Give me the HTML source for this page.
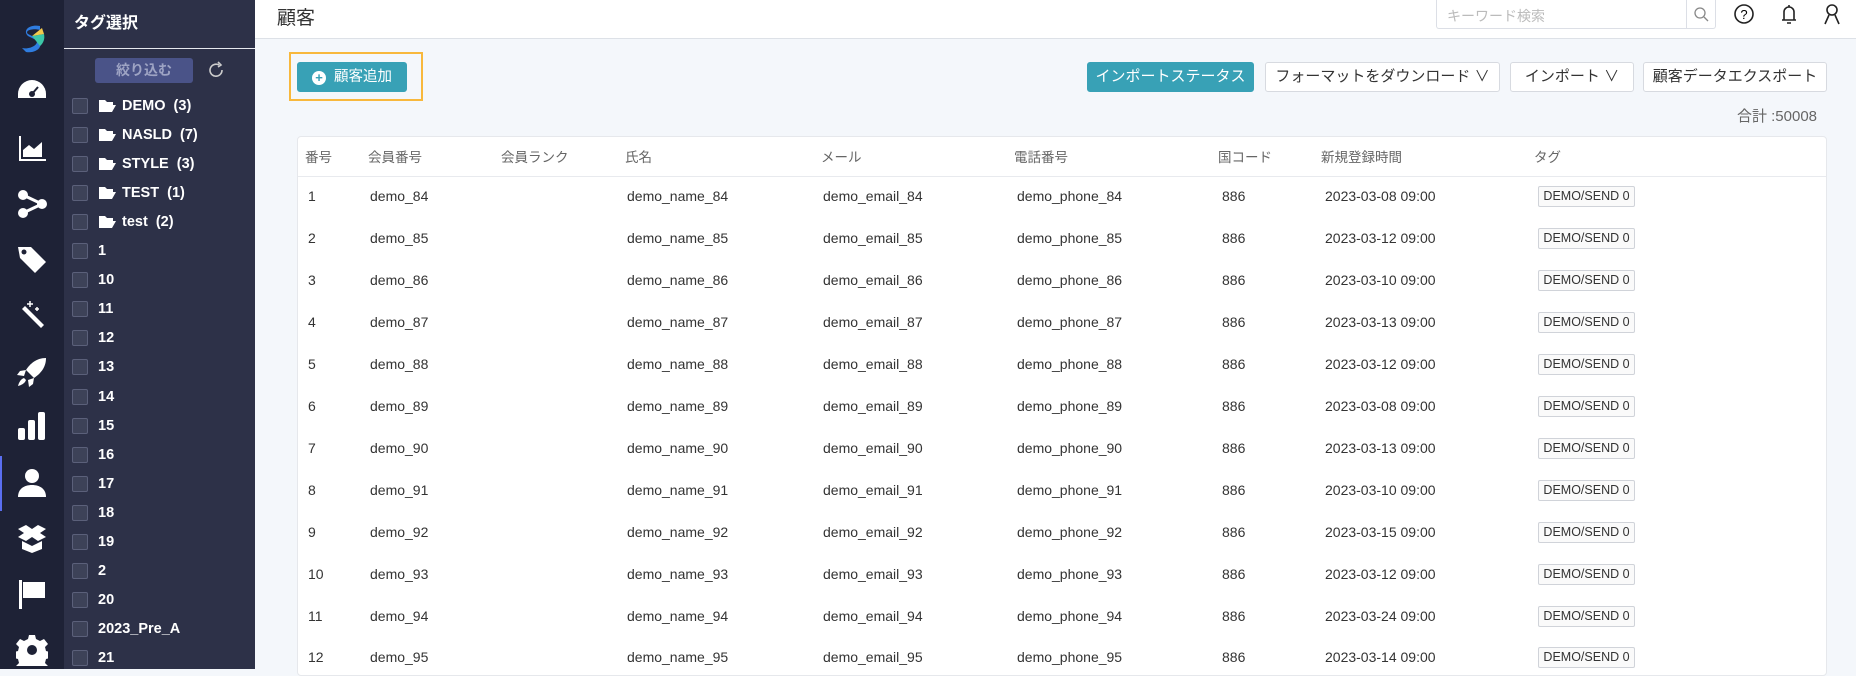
<!DOCTYPE html>
<html><head><meta charset="utf-8"><style>
*{box-sizing:border-box;margin:0;padding:0}
body{width:1856px;height:669px;overflow:hidden;font-family:"Liberation Sans","Noto Sans CJK JP",sans-serif;background:#f4f7fb;position:relative}
.rail{position:absolute;left:0;top:0;width:64px;height:669px;background:#1e2236}
.rail svg{position:absolute;left:16px;width:32px;height:32px;fill:#fff}
.panel{position:absolute;left:64px;top:0;width:191px;height:669px;background:#2d3148;color:#fff}
.ptitle{position:absolute;left:10px;top:9px;font-size:16px;font-weight:bold}
.pline{position:absolute;left:0;right:0;top:48px;border-top:1px solid #e6e8ee}
.filt{position:absolute;left:31px;top:58px;width:98px;height:25px;background:#4a5388;border-radius:3px;color:#9ea4c4;font-size:14px;font-weight:bold;text-align:center;line-height:25px}
.item{position:absolute;left:8px;height:20px;display:flex;align-items:center;font-size:14.5px;font-weight:bold}
.cb{width:16px;height:16px;border:1px solid #5b607a;background:#3d4258;border-radius:2px;margin-right:10px}
.top{position:absolute;left:255px;top:0;right:0;height:39px;background:#fff;border-bottom:1px solid #dde1e7}
.h1{position:absolute;left:22px;top:3px;font-size:19px;color:#333}
.search{position:absolute;left:1181px;top:0;width:280px;height:29px;border:1px solid #dcdfe6;border-top:none;border-radius:0 0 3px 3px;font-size:14px;color:#bbb;padding:6px 10px}
.search .sb{position:absolute;right:0;top:0;width:29px;height:28px;border-left:1px solid #dcdfe6}
.btn{position:absolute;top:62px;height:30px;border:1px solid #d7dae0;border-radius:3px;background:#fff;font-size:15px;color:#333;text-align:center;line-height:28px}
.teal{background:#38a1b6;border-color:#38a1b6;color:#fff}
.card{position:absolute;left:297px;top:136px;width:1530px;height:540px;background:#fff;border:1px solid #e6e8ec;border-radius:4px}
.hr{position:absolute;left:0;right:0;top:39px;border-top:1px solid #e8eaee}
.t{position:absolute;font-size:14px;color:#333;white-space:nowrap}
.th{color:#666;font-size:13.5px}
.tag{position:absolute;height:21px;width:97px;border:1px solid #d0d3d9;border-radius:2px;background:#fafafa;font-size:12.5px;color:#333;text-align:center;line-height:19px}
</style></head><body>
<div class="rail">
<svg style="top:22px" viewBox="0 0 32 32"><path d="M24 4 C14 2 6 8 12 14 L20 18 C24 22 14 28 6 26 L10 30 C22 32 30 22 20 16 L12 12 C8 8 18 6 24 8Z" fill="#2f7de0"/><path d="M16 14 L28 12 A12 12 0 0 1 24 24Z" fill="#3cc7a8"/><path d="M16 14 L26 6 L28 12Z" fill="#f2c94c"/></svg>
<svg style="top:74px" viewBox="0 0 32 32"><path d="M16 6A14 14 0 0 0 2 20v4h28v-4A14 14 0 0 0 16 6z"/><circle cx="16" cy="20" r="3" fill="#1e2236"/><path d="M16 20l6-7" stroke="#1e2236" stroke-width="2"/></svg>
<svg style="top:132px" viewBox="0 0 32 32"><path d="M3 4h2v23h25v2H3z"/><path d="M7 25V18l6-5 5 4 8-7v15z"/></svg>
<svg style="top:188px" viewBox="0 0 32 32"><circle cx="7" cy="7" r="5"/><circle cx="7" cy="25" r="5"/><circle cx="26" cy="16" r="5"/><path d="M7 7L26 16L7 25" stroke="#fff" stroke-width="3" fill="none"/></svg>
<svg style="top:243px" viewBox="0 0 32 32"><path d="M2 4h13l15 15-11 11L4 15z"/><circle cx="8" cy="9" r="2.5" fill="#1e2236"/></svg>
<svg style="top:299px" viewBox="0 0 32 32"><path d="M6 10l3-3 19 19-3 3z"/><path d="M14 2v6M11 5h6M21 8v4M19 10h4" stroke="#fff" stroke-width="1.5"/></svg>
<svg style="top:356px" viewBox="0 0 32 32"><path d="M30 2C20 2 14 8 10 14l8 8c6-4 12-10 12-20zM10 14l-6 1-3 4 7 1zM18 22l-1 6-4 3-1-7zM8 22c-3 1-5 4-6 8 4-1 7-3 8-6z"/></svg>
<svg style="top:410px" viewBox="0 0 32 32"><rect x="2" y="18" width="7" height="12" rx="2"/><rect x="12" y="10" width="7" height="20" rx="2"/><rect x="22" y="2" width="7" height="28" rx="2"/></svg>
<div style="position:absolute;left:0;top:456px;width:2px;height:55px;background:#5a6ef0"></div>
<svg style="top:467px" viewBox="0 0 32 32"><circle cx="16" cy="9" r="7"/><path d="M2 30c0-8 6-12 14-12s14 4 14 12z"/></svg>
<svg style="top:523px" viewBox="0 0 32 32"><path d="M2 6l8-4 6 4 6-4 8 4-6 4 6 4-8 4-6-4-6 4-8-4 6-4zM6 18v8l10 4 10-4v-8l-10 5z"/></svg>
<svg style="top:578px" viewBox="0 0 32 32"><rect x="3" y="2" width="3" height="29"/><path d="M7 4h22v16H7z"/></svg>
<svg style="top:634px" viewBox="0 0 32 32"><path d="M13 1h6l1 4 4 2 4-2 4 5-3 3 1 4 4 1v6l-4 1-1 4 3 3-4 5-4-2-4 2-1 4h-6l-1-4-4-2-4 2-4-5 3-3-1-4-4-1v-6l4-1 1-4-3-3 4-5 4 2 4-2z"/><circle cx="16" cy="16" r="5" fill="#1e2236"/></svg>
</div>
<div class="panel">
<div class="ptitle">タグ選択</div>
<div class="pline"></div>
<div class="filt">絞り込む</div>
<svg style="position:absolute;left:143px;top:61px" width="18" height="18" viewBox="0 0 18 18"><path d="M15 9A6 6 0 1 1 12 4" stroke="#ccc" stroke-width="1.6" fill="none"/><path d="M11 1l3 3-3 2" stroke="#ccc" stroke-width="1.6" fill="none"/></svg>
</div>
<div id="list"></div>
<div class="top"><div class="h1">顧客</div>
<div class="search">キーワード検索<div class="sb"><svg width="28" height="28" viewBox="0 0 28 28"><circle cx="13" cy="13" r="5" stroke="#888" fill="none" stroke-width="1.3"/><path d="M17 17l4 4" stroke="#888" stroke-width="1.3"/></svg></div></div>
<svg style="position:absolute;left:1478px;top:3px" width="22" height="22" viewBox="0 0 22 22"><circle cx="11" cy="11" r="9" stroke="#222" stroke-width="1.6" fill="none"/><text x="11" y="16" font-size="13" text-anchor="middle" font-family="Liberation Sans">?</text></svg>
<svg style="position:absolute;left:1523px;top:3px" width="22" height="22" viewBox="0 0 22 22"><path d="M6 17V9a5 5 0 0 1 10 0v8zM4 17h14M9 20h4M11 2v2" stroke="#222" stroke-width="1.6" fill="none"/></svg>
<svg style="position:absolute;left:1566px;top:3px" width="22" height="22" viewBox="0 0 22 22"><circle cx="11" cy="7" r="5" stroke="#222" stroke-width="1.6" fill="none"/><path d="M4 21l4-9M18 21l-4-9" stroke="#222" stroke-width="1.6" fill="none"/></svg>
</div>
<div style="position:absolute;left:289px;top:52px;width:134px;height:49px;border:2px solid #f8b83c"></div>
<div class="btn teal" style="left:297px;width:110px;font-size:14.5px"><span style="display:inline-block;width:14px;height:14px;border-radius:50%;background:#fff;color:#38a1b6;font-size:13px;line-height:14px;font-weight:bold;vertical-align:-1px;margin-right:8px">+</span>顧客追加</div>
<div class="btn teal" style="left:1087px;width:167px">インポートステータス</div>
<div class="btn" style="left:1265px;width:235px">フォーマットをダウンロード ∨</div>
<div class="btn" style="left:1510px;width:124px">インポート ∨</div>
<div class="btn" style="left:1643px;width:184px">顧客データエクスポート</div>
<div class="t" style="right:39px;top:105px;color:#666;font-size:15px">合計 :50008</div>
<div class="card"><div class="hr"></div></div>
<div id="tbl"></div>
<script>
var L=[["DEMO  (3)",1],["NASLD  (7)",1],["STYLE  (3)",1],["TEST  (1)",1],["test  (2)",1],["1"],["10"],["11"],["12"],["13"],["14"],["15"],["16"],["17"],["18"],["19"],["2"],["20"],["2023_Pre_A"],["21"]];
var h='';L.forEach(function(a,i){var y=96+i*29.05;h+='<div class="item" style="left:72px;top:'+y+'px;color:#fff"><div class="cb"></div>'+(a[1]?'<svg width="18" height="14" viewBox="0 0 18 14" style="margin-right:6px"><path d="M1 1h6l2 2h6v3H5L1 13z M5 6h13l-4 7H1z" fill="#fff"/></svg>':'')+'<span style="white-space:pre">'+a[0]+'</span></div>';});
document.getElementById('list').innerHTML=h;
var H=[["番号",305],["会員番号",368],["会員ランク",501],["氏名",625],["メール",821],["電話番号",1014],["国コード",1218],["新規登録時間",1321],["タグ",1534]];
var t='';H.forEach(function(c){t+='<div class="t th" style="left:'+c[1]+'px;top:146px">'+c[0]+'</div>';});
var D=["08","12","10","13","12","08","13","10","15","12","24","14"];
for(var i=0;i<12;i++){var y=188+i*41.95,n=84+i;
t+='<div class="t" style="left:308px;top:'+y+'px">'+(i+1)+'</div><div class="t" style="left:370px;top:'+y+'px">demo_'+n+'</div><div class="t" style="left:627px;top:'+y+'px">demo_name_'+n+'</div><div class="t" style="left:823px;top:'+y+'px">demo_email_'+n+'</div><div class="t" style="left:1017px;top:'+y+'px">demo_phone_'+n+'</div><div class="t" style="left:1222px;top:'+y+'px">886</div><div class="t" style="left:1325px;top:'+y+'px">2023-03-'+D[i]+' 09:00</div><div class="tag" style="left:1538px;top:'+(y-2)+'px">DEMO/SEND 0</div>';}
document.getElementById('tbl').innerHTML=t;
</script>
</body></html>
